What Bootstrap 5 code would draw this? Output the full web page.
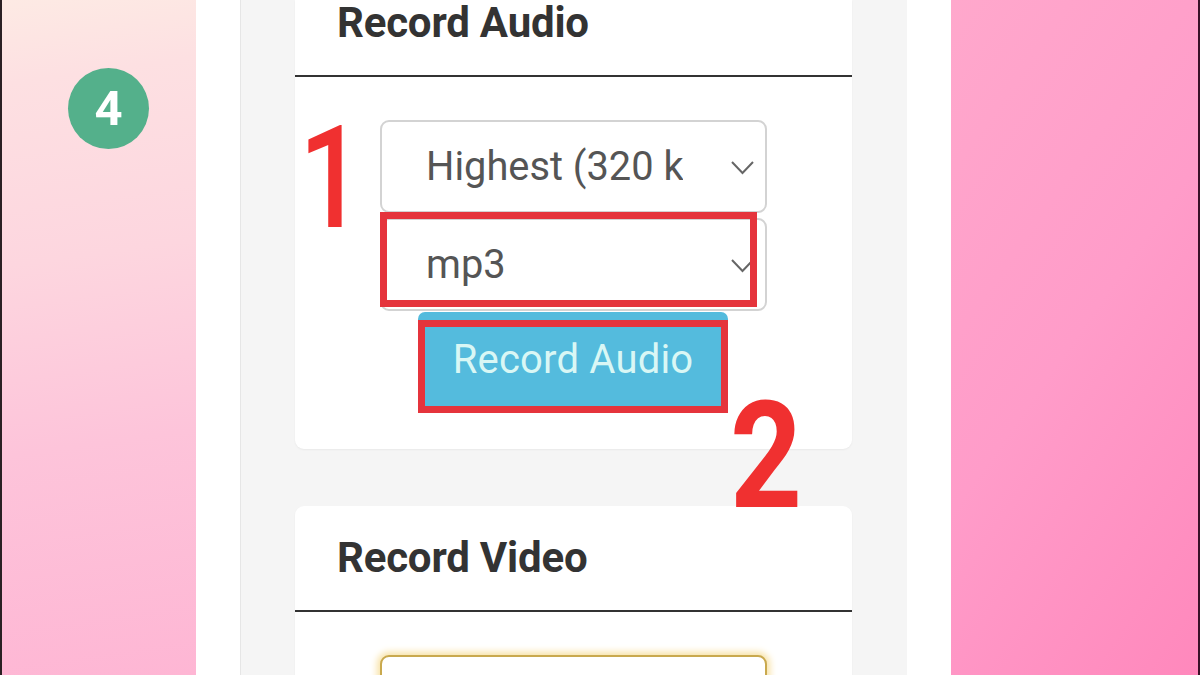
<!doctype html>
<html lang="en">
<head>
<meta charset="utf-8">
<title>Record Audio</title>
<link rel="stylesheet" href="https://cdn.jsdelivr.net/npm/bootstrap@5.3.0/dist/css/bootstrap.min.css">
<style>
html,body{height:675px;overflow:hidden;margin:0}
body{font-family:Roboto,"Liberation Sans",sans-serif;background:#fff}
.stage{height:675px;border-left:2px solid #2a2024}
.pink-left{width:194px;padding:68px 0 0 66px;background:linear-gradient(172deg,#fdeae4 0%,#fde0e2 12%,#fdd6df 38%,#fdc4da 65%,#feb6d4 100%)}
.pink-right{width:249px;border-right:2px solid #3a1028;background:linear-gradient(125deg,#ffa8cc 0%,#ff9cc9 50%,#ff88bc 100%)}
.step-dot{width:81px;height:81px;background:#54b08b;color:#fff;font-size:49px;font-weight:700;line-height:1}
.shell{width:755px;padding:0 44px}
.phone{height:675px;overflow:hidden;background:#f5f5f5;padding:0 55px 0 54px;border-left:1px solid #e6e6e6}
.panel{background:#fff;border:0;border-radius:0 0 9px 9px;box-shadow:0 1px 2px rgba(0,0,0,.05);--bs-card-bg:#fff}
.panel-two{border-radius:9px 9px 0 0;flex:1;min-height:0;overflow:hidden;margin-top:57px}
.panel-head{height:77px;flex-shrink:0;border-bottom:2px solid #333;padding:0 0 0 42px;color:#333;font-size:42px;font-weight:700;line-height:45px;letter-spacing:-.2px;background:transparent}
.panel-head-two{height:106px;padding-top:29px}
.panel-body{padding:43px 85px 37px;position:relative;flex-shrink:0}
.panel-body-two{padding-top:43px;padding-bottom:0}
.pick{height:93px;border:2px solid #d3d3d3;border-radius:9px;color:#555;font-size:39.8px;line-height:1.2;padding:0 82px 0 44px;margin-bottom:5px;box-shadow:none;background-size:27px 20px;background-position:right 9px center;background-image:url("data:image/svg+xml,%3csvg xmlns='http://www.w3.org/2000/svg' viewBox='0 0 27 20'%3e%3cpath fill='none' stroke='%23666' stroke-width='2' d='M3 5L13.500 16L24 5'/%3e%3c/svg%3e")}
.pick-gold{border-color:#c9a94e;box-shadow:0 0 7px 3px #f8e2a6}
.act{width:310px;height:100px;margin:-4px 0 0 38px;background:#54bbdd;border:0;border-radius:7px 7px 0 0;color:#d9f7f5;font-size:40px;line-height:1;padding:0 0 4px;letter-spacing:.2px}
.act:hover{background:#54bbdd;color:#d9f7f5}
.mark-box{position:absolute;border:7px solid #e5343c;pointer-events:none}
.mark-select{left:85px;top:135px;width:377px;height:95px}
.mark-btn{left:123px;top:243px;width:310px;height:93px}
.mark-num{position:absolute;color:#f03030;font-weight:500;line-height:1;transform-origin:0 0}
.num-one{left:4px;top:31px;font-size:142px;transform:scaleX(.8)}
.num-two{left:435px;top:306px;z-index:3;font-weight:700;font-size:148px;transform:scaleX(.85)}
</style>
</head>
<body>
<div class="stage d-flex">
  <aside class="pink-left flex-shrink-0">
    <div class="step-dot rounded-circle d-flex align-items-center justify-content-center">4</div>
  </aside>
  <main class="shell flex-shrink-0 bg-white">
    <div class="phone d-flex flex-column">
      <section class="card panel flex-shrink-0">
        <h2 class="panel-head m-0">Record Audio</h2>
        <div class="panel-body">
          <span class="mark-num num-one">1</span>
          <select class="form-select pick" aria-label="Audio quality"><option>Highest (320 kbps)</option></select>
          <select class="form-select pick" aria-label="Audio format"><option>mp3</option></select>
          <button type="button" class="btn act d-block">Record Audio</button>
          <div class="mark-box mark-select"></div>
          <div class="mark-box mark-btn"></div>
          <span class="mark-num num-two">2</span>
        </div>
      </section>
      <section class="card panel panel-two">
        <h2 class="panel-head panel-head-two m-0">Record Video</h2>
        <div class="panel-body panel-body-two">
          <select class="form-select pick pick-gold" aria-label="Video quality"><option></option></select>
        </div>
      </section>
    </div>
  </main>
  <aside class="pink-right flex-shrink-0"></aside>
</div>
<script src="https://cdn.jsdelivr.net/npm/bootstrap@5.3.0/dist/js/bootstrap.bundle.min.js"></script>
</body>
</html>
